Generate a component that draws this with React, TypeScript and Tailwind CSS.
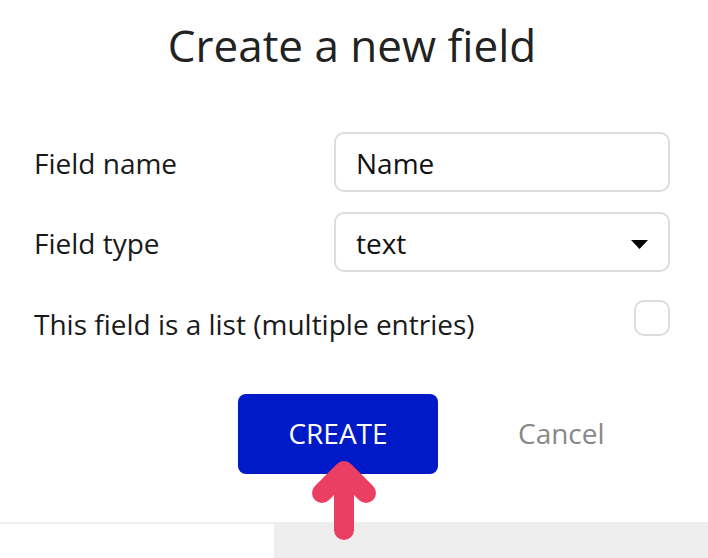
export default function App() {
  return (
    <div className="relative flex h-[558px] w-[708px] flex-col overflow-hidden bg-white font-['Open_Sans',sans-serif] text-[#1a1a1a]">
      <h1 className="mt-[15px] pr-1 text-center text-[44px] leading-[60px] font-normal text-[#222]">Create a new field</h1>

      <div className="mt-[57px] flex flex-col pr-[38px] pl-[34px]">
        <div className="flex h-[60px] items-center justify-between">
          <label className="pt-[2px] text-[28px] leading-none">Field name</label>
          <input
            defaultValue="Name"
            className="h-[60px] w-[336px] rounded-[10px] border-2 border-[#ddd] bg-white px-5 pt-[2px] text-[28px] text-[#111] outline-none"
          />
        </div>
        <div className="mt-5 flex h-[60px] items-center justify-between">
          <label className="pt-[2px] text-[28px] leading-none">Field type</label>
          <div className="flex h-[60px] w-[336px] items-center justify-between rounded-[10px] border-2 border-[#ddd] pr-[20px] pl-5 text-[28px] text-[#111]">
            <span className="pt-[2px]">text</span>
            <svg className="mt-[4px]" width="17" height="9" viewBox="0 0 17 9">
              <path d="M0 0h17L8.5 9z" fill="#000" />
            </svg>
          </div>
        </div>
        <div className="mt-7 flex h-[44px] items-start justify-between">
          <label className="pt-[10px] text-[28px] leading-none">This field is a list (multiple entries)</label>
          <div className="h-9 w-9 rounded-[10px] border-2 border-[#ddd]" />
        </div>
      </div>

      <div className="mt-[50px] flex items-center pl-[238px]">
        <button className="h-20 w-[200px] rounded-lg bg-[#001ac8] pb-[2px] text-[28px] text-white">CREATE</button>
        <span className="ml-[80px] pb-[2px] text-[28px] text-[#888]">Cancel</span>
      </div>

      <div className="mt-auto flex h-9 border-t-2 border-[#eee]">
        <div className="w-[274px] bg-white" />
        <div className="flex-1 bg-[#eee]" />
      </div>

      <svg className="absolute top-[455px] left-[300px] blur-[0.5px]" width="88" height="92" viewBox="0 0 88 92">
        <path
          d="M44 75V16M22 38L44 16L66 38"
          fill="none"
          stroke="#ea3e62"
          strokeWidth="20"
          strokeLinecap="round"
          strokeLinejoin="round"
        />
      </svg>
    </div>
  );
}
